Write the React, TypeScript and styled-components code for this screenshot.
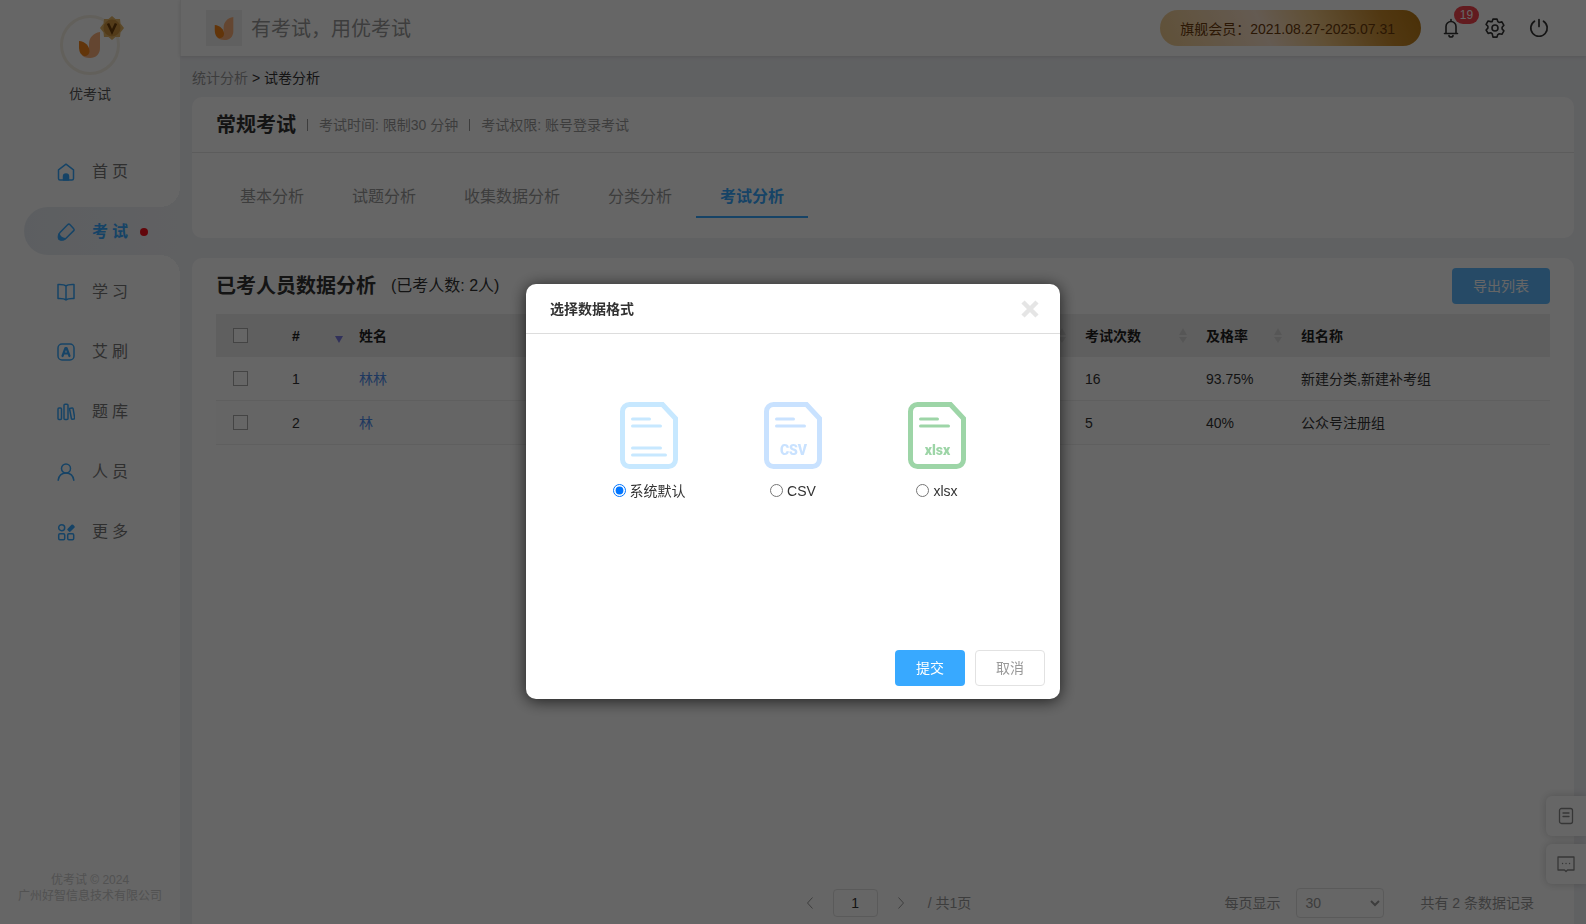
import React from 'react';
import styled, { createGlobalStyle, css } from 'styled-components';

const BLUE = '#38a9ff';
const PAGE = '#f1f2f6';

const GlobalStyle = createGlobalStyle`
  *, *::before, *::after { box-sizing: border-box; }
  body {
    margin: 0;
    background: ${PAGE};
    color: #333;
    font: 14px/20px "Liberation Sans", "Noto Sans CJK SC", sans-serif;
  }
  button, input, select { font: inherit; }
  h1, h2, p { margin: 0; }
`;

const Shell = styled.div`
  display: grid;
  grid-template-columns: 180px minmax(0, 1fr);
  min-height: 100vh;
`;

/* ---------- sidebar ---------- */

const Sidebar = styled.aside`
  display: flex;
  flex-direction: column;
  background: #fff;
`;

const Profile = styled.div`
  display: flex;
  flex-direction: column;
  align-items: center;
  gap: 9px;
  padding-top: 15px;
  height: 141px;
  color: #555;
`;

const Avatar = styled.div`
  position: relative;
  display: grid;
  place-items: center;
  width: 60px;
  height: 60px;
  border: 3px solid #f6efe4;
  border-radius: 50%;
`;

const VipMark = styled.svg`
  position: absolute;
  top: -2px;
  right: -7px;
`;

const Nav = styled.nav`
  display: flex;
  flex-direction: column;
  gap: 12px;
  padding: 6px 0 0 24px;
`;

const NavItem = styled.a<{ $active?: boolean }>`
  position: relative;
  display: flex;
  align-items: center;
  gap: 17px;
  height: 48px;
  padding: 2px 0 0 33px;
  border-radius: 24px 0 0 24px;
  color: #777;
  font-size: 16px;
  text-decoration: none;
  svg { color: ${BLUE}; }

  ${({ $active }) => $active && css`
    background: linear-gradient(90deg, #e7ecf2, ${PAGE});
    color: ${BLUE};
    font-weight: 700;
    &::before, &::after {
      content: '';
      position: absolute;
      right: 0;
      width: 20px;
      height: 20px;
    }
    &::before {
      bottom: 100%;
      background: radial-gradient(circle at 0 0, transparent 20px, ${PAGE} 20px);
    }
    &::after {
      top: 100%;
      background: radial-gradient(circle at 0 100%, transparent 20px, ${PAGE} 20px);
    }
  `}
`;

const NavLabel = styled.span`
  letter-spacing: 4px;
`;

const NewDot = styled.i`
  width: 8px;
  height: 8px;
  margin-left: -9px;
  border-radius: 50%;
  background: #f5101c;
`;

const Copyright = styled.footer`
  margin-top: auto;
  padding-bottom: 20px;
  color: #ccc;
  font-size: 12px;
  line-height: 16px;
  text-align: center;
`;

/* ---------- main column ---------- */

const Main = styled.div`
  display: flex;
  flex-direction: column;
`;

const TopBar = styled.header`
  display: flex;
  align-items: center;
  height: 56px;
  padding: 0 37px 0 25px;
  border-left: 1px solid #f0f0f0;
  background: #fff;
  box-shadow: 0 1px 4px rgba(0, 0, 0, 0.12);
`;

const Brand = styled.div`
  display: flex;
  align-items: center;
  gap: 9px;
  margin-right: auto;
  color: #999;
  font-size: 20px;
  line-height: 36px;
`;

const BrandTile = styled.span`
  display: grid;
  place-items: center;
  width: 36px;
  height: 36px;
  background: #f1f1f1;
`;

const BrandText = styled.span`
  padding-top: 2px;
`;

const Membership = styled.div`
  height: 36px;
  margin-right: 20px;
  padding: 0 26px 0 20px;
  border-radius: 18px;
  background: linear-gradient(65deg, #efc98c 0%, #fbe3cd 40%, #f0c684 60%, #c98a2c 85%, #b87812 100%);
  color: #6b3a0a;
  line-height: 38px;
`;

const ToolButton = styled.button`
  position: relative;
  display: grid;
  place-items: center;
  width: 20px;
  height: 20px;
  padding: 0;
  border: 0;
  background: none;
  color: #333;
  & + & { margin-left: 24px; }
`;

const Count = styled.span`
  position: absolute;
  top: -12px;
  left: 13px;
  width: 25px;
  height: 18px;
  border-radius: 9px;
  background: #f5454f;
  color: #fff;
  font-size: 12px;
  line-height: 18px;
`;

const Content = styled.main`
  display: flex;
  flex: 1;
  flex-direction: column;
  padding: 0 12px;
`;

const Breadcrumb = styled.nav`
  padding: 12px 0 9px;
  color: #333;
  a { color: #999; text-decoration: none; }
`;

const Card = styled.section<{ $fill?: boolean }>`
  border-radius: ${({ $fill }) => ($fill ? '10px 10px 0 0' : '10px')};
  background: #fff;
  ${({ $fill }) => $fill && css`
    display: flex;
    flex: 1;
    flex-direction: column;
    margin-top: 20px;
    padding: 10px 24px 6px;
  `}
`;

const ExamHead = styled.div`
  display: flex;
  align-items: center;
  gap: 11px;
  height: 56px;
  padding: 0 24px;
  border-bottom: 1px solid #e6e6e6;
  color: #999;
`;

const Title = styled.h1`
  color: #333;
  font-size: 20px;
  line-height: 28px;
`;

const Divider = styled.i`
  width: 1px;
  height: 12px;
  background: #999;
`;

const Tabs = styled.div`
  display: flex;
  padding: 20px 24px;
`;

const Tab = styled.button<{ $active?: boolean }>`
  height: 45px;
  padding: 4px 24px 0;
  border: 0;
  border-bottom: 2px solid ${({ $active }) => ($active ? BLUE : 'transparent')};
  background: none;
  color: ${({ $active }) => ($active ? BLUE : '#999')};
  font-size: 16px;
  font-weight: ${({ $active }) => ($active ? 700 : 400)};
`;

const ListHead = styled.div`
  display: flex;
  align-items: center;
  gap: 15px;
  margin-bottom: 10px;
`;

const Subtotal = styled.span`
  font-size: 16px;
`;

const PrimaryButton = styled.button<{ $soft?: boolean }>`
  height: 36px;
  padding: 0 21px;
  border: 0;
  border-radius: 4px;
  background: ${({ $soft }) => ($soft ? '#60baff' : BLUE)};
  color: #fff;
  ${({ $soft }) => $soft && 'margin-left: auto;'}
`;

const Table = styled.table`
  width: 100%;
  table-layout: fixed;
  border-collapse: separate;
  border-spacing: 0;
  color: #333;
  th, td {
    padding: 0 3px 0 16px;
    text-align: left;
  }
  th:first-child, td:first-child { padding-left: 17px; }
  th {
    height: 43px;
    background: #eee;
    color: #222;
  }
  td {
    height: 44px;
    border-bottom: 1px solid #eee;
  }
  tbody tr:nth-child(even) td { background: #fcfcfc; }
  a { color: #4f8ef0; text-decoration: none; }
`;

const Col = styled.col<{ $w?: number }>`
  width: ${({ $w }) => ($w ? `${$w}px` : 'auto')};
`;

const HeadCell = styled.div<{ $sorted?: boolean }>`
  display: flex;
  align-items: center;
  justify-content: space-between;
  margin-right: ${({ $sorted }) => ($sorted ? -3 : 0)}px;
`;

const Check = styled.input`
  display: block;
  appearance: none;
  width: 15px;
  height: 15px;
  margin: 0;
  border: 1px solid #aaa;
  background: #fff;
`;

const Pager = styled.div`
  display: flex;
  align-items: center;
  margin-top: auto;
  padding-left: 8px;
  color: #999;
`;

const PagerSide = styled.div<{ $end?: boolean }>`
  display: flex;
  flex: 1;
  align-items: center;
  justify-content: ${({ $end }) => ($end ? 'flex-end' : 'flex-start')};
`;

const PageArrow = styled.button`
  display: grid;
  place-items: center;
  width: 14px;
  height: 20px;
  padding: 0;
  border: 0;
  background: none;
  color: #999;
`;

const PageBox = styled.input`
  width: 45px;
  height: 28px;
  margin: 0 16px;
  padding: 0;
  border: 1px solid #e0e0e0;
  border-radius: 4px;
  background: #fff;
  color: #333;
  text-align: center;
`;

const PageTotal = styled.span`
  margin-left: 20px;
`;

const SizeLabel = styled.label`
  display: flex;
  align-items: center;
  gap: 16px;
  margin-right: 36px;
`;

const SizeSelect = styled.select`
  width: 88px;
  height: 30px;
  padding: 0 4px;
  border: 1px solid #e0e0e0;
  border-radius: 4px;
  background: #fff;
  color: #999;
`;

const Records = styled.span`
  margin-right: 16px;
`;

const Dock = styled.div`
  position: fixed;
  right: 0;
  bottom: 40px;
  display: flex;
  flex-direction: column;
  gap: 8px;
`;

const DockButton = styled.button`
  display: grid;
  place-items: center;
  width: 40px;
  height: 40px;
  padding: 0;
  border: 0;
  border-radius: 6px 0 0 6px;
  background: #fff;
  box-shadow: 0 0 8px rgba(0, 0, 0, 0.2);
  color: #888;
`;

/* ---------- dialog ---------- */

const Backdrop = styled.div`
  position: fixed;
  inset: 0;
  display: flex;
  align-items: flex-start;
  justify-content: center;
  padding-top: 284px;
  background: rgba(0, 0, 0, 0.6);
`;

const Dialog = styled.div`
  display: flex;
  flex-direction: column;
  width: 534px;
  border-radius: 10px;
  background: #fff;
  box-shadow: 0 2px 16px rgba(0, 0, 0, 0.7);
`;

const DialogHead = styled.div`
  display: flex;
  align-items: center;
  justify-content: space-between;
  height: 50px;
  padding: 0 21px 0 24px;
  border-bottom: 1px solid #ddd;
`;

const DialogTitle = styled.h2`
  font-size: 14px;
  line-height: 20px;
`;

const CloseButton = styled.button`
  display: grid;
  padding: 0;
  border: 0;
  background: none;
`;

const Formats = styled.div`
  display: flex;
  justify-content: center;
  padding: 68px 0 149px;
`;

const Format = styled.label`
  display: flex;
  flex-direction: column;
  align-items: center;
  gap: 12px;
  width: 144px;
`;

const RadioLine = styled.span`
  display: flex;
  align-items: center;
  gap: 4px;
  input { width: 13px; height: 13px; margin: 0 0 2px; }
`;

const DialogFoot = styled.div`
  display: flex;
  justify-content: flex-end;
  gap: 10px;
  padding: 0 15px 13px;
`;

const PlainButton = styled.button`
  height: 36px;
  padding: 0 20px;
  border: 1px solid #e2e2e2;
  border-radius: 4px;
  background: #fff;
  color: #999;
`;

/* ---------- drawings ---------- */

const Flame = ({ size }: { size: number }) => (
  <svg width={size} height={size} viewBox="0 0 26 26" aria-hidden="true">
    <path d="M23 0v16c0 6-4 10-10 10-4 0-7-1-8-3l7-4v-7C12 6 16 1 23 0Z" fill="#fbb07a" />
    <path d="M2 9c6 .5 10.500 5 10.500 10 0 3-2 5-5 5C4 23.500 2 20 2 15Z" fill="#f5851a" />
  </svg>
);

const Sorter = ({ down }: { down?: boolean }) => (
  <svg width="8" height="15" viewBox="0 0 8 15" aria-hidden="true">
    {!down && <path d="M4 0l4 7H0Z" fill="#d8d8d8" />}
    <path d={down ? 'M0 8h8l-4 7Z' : 'M0 9h8l-4 6Z'} fill={down ? '#7b7be0' : '#d8d8d8'} />
  </svg>
);

const Line = ({ size = 18, box = 18, width = 1.5, children }: {
  size?: number; box?: number; width?: number; children: React.ReactNode;
}) => (
  <svg width={size} height={size} viewBox={`0 0 ${box} ${box}`} fill="none" stroke="currentColor"
    strokeWidth={width} strokeLinejoin="round" strokeLinecap="round" aria-hidden="true">
    {children}
  </svg>
);

const FileIcon = ({ color, text }: { color: string; text?: string }) => (
  <svg width="58" height="67" viewBox="0 0 58 67" fill="none" stroke={color} aria-hidden="true">
    <path d="M9.500 2.500H42.500L55.500 16.500V57.500a7 7 0 0 1-7 7H9.500a7 7 0 0 1-7-7V9.500a7 7 0 0 1 7-7Z" strokeWidth="5" />
    <path d="M12.500 17H29.500M12.500 24H40.500" strokeWidth="3" strokeLinecap="round" />
    {text ? (
      <text x="29.500" y="53" textAnchor="middle" fill={color} stroke="none" fontFamily="Roboto, sans-serif"
        fontSize="14" fontWeight="900">{text}</text>
    ) : (
      <path d="M12.500 46H40.500M12.500 53H45.500" strokeWidth="3" strokeLinecap="round" />
    )}
  </svg>
);

const navItems = [
  { label: '首页', icon: <><path d="M1.500 6.800 9 1.200l7.500 5.600V15.500a1.500 1.500 0 0 1-1.500 1.500H3a1.500 1.500 0 0 1-1.500-1.500Z" /><path d="M6.500 17v-3.500a2.500 2.500 0 0 1 5 0V17Z" fill="currentColor" /></> },
  { label: '考试', active: true, icon: <><path d="M10.600 1.700a1.800 1.800 0 0 1 2.500 0l3.400 3.700a1.800 1.800 0 0 1 0 2.500l-7.700 7.600c-1.200 1.200-3 1.500-5.300 1.300-1.200-.1-2-.8-2-2.300 0-2 .2-3.500 1.500-4.900Z" /><path d="M2 11c1 2.500 3 4.300 6 4.800-2 1.400-4.500 1.200-5.500.2S1.200 13 2 11Z" fill="currentColor" /></> },
  { label: '学习', icon: <path d="M9 3C7.500 1.500 5 1.300 1 1.500v14c4-.2 6.500 0 8 1.500 1.500-1.500 4-1.700 8-1.500v-14C13 1.300 10.500 1.500 9 3ZM9 3v14" /> },
  { label: '艾刷', icon: <><rect x="1" y="1" width="16" height="16" rx="4" /><path d="M5.500 13 8.500 5h1l3 8M7 10.500h4" strokeWidth="2.200" /></> },
  { label: '题库', icon: <><rect x="1" y="5" width="3.500" height="11.500" rx="1" /><rect x="7" y="1.200" width="4" height="15.300" rx="1" /><path d="m12.500 5.500 2.600-.6a1 1 0 0 1 1 .7L17.700 15a1 1 0 0 1-.8 1l-1.500.3a1 1 0 0 1-1-.8Z" /></> },
  { label: '人员', icon: <><circle cx="9" cy="5.500" r="4.500" /><path d="M1.200 17.200c.6-4.500 3.800-7.200 7.800-7.200s7.200 2.700 7.800 7.200" /></> },
  { label: '更多', icon: <><circle cx="4.700" cy="4.700" r="3" /><rect x="1.700" y="10.700" width="6" height="6" rx="1.200" /><rect x="10.700" y="10.700" width="6" height="6" rx="1.200" /><path d="m11.500 6.500 3.800-3.800 1.200 1.200-3.800 3.800Z" strokeWidth="2.400" fill="currentColor" /></> },
];

const tabs = ['基本分析', '试题分析', '收集数据分析', '分类分析', '考试分析'];

const people = [
  { name: '林林', times: 16, rate: '93.75%', group: '新建分类,新建补考组' },
  { name: '林', times: 5, rate: '40%', group: '公众号注册组' },
];

const formats = [
  { label: '系统默认', color: '#c7e8ff' },
  { label: 'CSV', color: '#c9e2ff', text: 'CSV' },
  { label: 'xlsx', color: '#9dd5a7', text: 'xlsx' },
];

export default function App() {
  return (
    <>
      <GlobalStyle />
      <Shell>
        <Sidebar>
          <Profile>
            <Avatar>
              <Flame size={26} />
              <VipMark width="24" height="24" viewBox="0 0 24 24" aria-hidden="true">
                <path d="M12 0l3.500 3H20l.5 4.500L24 12l-3.500 4.500L20 21h-4.500L12 24l-3.500-3H4l-.5-4.500L0 12l3.500-4.500L4 3h4.500Z" fill="#e3b566" />
                <circle cx="12" cy="12" r="8.500" fill="#cf9440" />
                <path d="m8 7.500 4 8.500 4-8.500" fill="none" stroke="#6e400a" strokeWidth="2.600" />
              </VipMark>
            </Avatar>
            <span>优考试</span>
          </Profile>
          <Nav>
            {navItems.map((item) => (
              <NavItem key={item.label} href="#" $active={item.active}>
                <Line>{item.icon}</Line>
                <NavLabel>{item.label}</NavLabel>
                {item.active && <NewDot />}
              </NavItem>
            ))}
          </Nav>
          <Copyright>
            <p>优考试 © 2024</p>
            <p>广州好智信息技术有限公司</p>
          </Copyright>
        </Sidebar>

        <Main>
          <TopBar>
            <Brand>
              <BrandTile><Flame size={23} /></BrandTile>
              <BrandText>有考试，用优考试</BrandText>
            </Brand>
            <Membership>旗舰会员：2021.08.27-2025.07.31</Membership>
            <ToolButton aria-label="通知">
              <Line size={20} box={20} width={1.6}>
                <path d="M3.500 15.500h13M5 15V8.500a5 5 0 0 1 10 0V15M10 1.500V3M8 17.500a2 1.500 0 0 0 4 0" />
              </Line>
              <Count>19</Count>
            </ToolButton>
            <ToolButton aria-label="设置">
              <Line size={20} box={20} width={1.6}>
                <path d="M8 1.500h4l.8 2.500 1.500.9 2.600-.6 2 3.400-1.800 1.900v1.800l1.800 1.900-2 3.400-2.600-.6-1.500.9-.8 2.500H8L7.200 16.100l-1.500-.9-2.600.6-2-3.400 1.800-1.900V8.700L1.100 6.800l2-3.400 2.600.6L7.200 4Z" transform="translate(0 -.4)" />
                <circle cx="10" cy="10" r="3" />
              </Line>
            </ToolButton>
            <ToolButton aria-label="退出">
              <Line size={20} box={20} width={1.7}>
                <path d="M10 1.500v7M5.500 3.200a8.200 8.200 0 1 0 9 0" />
              </Line>
            </ToolButton>
          </TopBar>

          <Content>
            <Breadcrumb><a href="#">统计分析</a> &gt; 试卷分析</Breadcrumb>
            <Card>
              <ExamHead>
                <Title>常规考试</Title>
                <Divider />
                <span>考试时间: 限制30 分钟</span>
                <Divider />
                <span>考试权限: 账号登录考试</span>
              </ExamHead>
              <Tabs>
                {tabs.map((t) => <Tab key={t} $active={t === '考试分析'}>{t}</Tab>)}
              </Tabs>
            </Card>

            <Card $fill>
              <ListHead>
                <Title as="h2">已考人员数据分析</Title>
                <Subtotal>(已考人数: 2人)</Subtotal>
                <PrimaryButton $soft>导出列表</PrimaryButton>
              </ListHead>
              <Table>
                <colgroup>
                  <Col $w={60} /><Col $w={67} /><Col /><Col $w={121} /><Col $w={95} /><Col $w={265} />
                </colgroup>
                <thead>
                  <tr>
                    <th><Check type="checkbox" aria-label="全选" /></th>
                    <th><HeadCell $sorted>#<Sorter down /></HeadCell></th>
                    <th><HeadCell>姓名<Sorter /></HeadCell></th>
                    <th><HeadCell>考试次数<Sorter /></HeadCell></th>
                    <th><HeadCell>及格率<Sorter /></HeadCell></th>
                    <th>组名称</th>
                  </tr>
                </thead>
                <tbody>
                  {people.map((p, i) => (
                    <tr key={p.name}>
                      <td><Check type="checkbox" aria-label={p.name} /></td>
                      <td>{i + 1}</td>
                      <td><a href="#">{p.name}</a></td>
                      <td>{p.times}</td>
                      <td>{p.rate}</td>
                      <td>{p.group}</td>
                    </tr>
                  ))}
                </tbody>
              </Table>
              <Pager>
                <PagerSide />
                <PageArrow aria-label="上一页">
                  <svg width="6" height="12" viewBox="0 0 6 12" fill="none" stroke="currentColor"><path d="M5.500.5.500 6l5 5.500" /></svg>
                </PageArrow>
                <PageBox aria-label="页码" defaultValue="1" />
                <PageArrow aria-label="下一页">
                  <svg width="6" height="12" viewBox="0 0 6 12" fill="none" stroke="currentColor"><path d="M.5.500 5.500 6l-5 5.500" /></svg>
                </PageArrow>
                <PageTotal>/ 共1页</PageTotal>
                <PagerSide $end>
                  <SizeLabel>
                    每页显示
                    <SizeSelect defaultValue="30"><option>30</option></SizeSelect>
                  </SizeLabel>
                  <Records>共有 2 条数据记录</Records>
                </PagerSide>
              </Pager>
            </Card>
          </Content>
        </Main>
      </Shell>

      <Dock>
        <DockButton aria-label="文档">
          <Line size={18} width={1.3}><rect x="2.500" y="1.500" width="13" height="15" rx="2" /><path d="M6 6h6M6 9.500h6" /></Line>
        </DockButton>
        <DockButton aria-label="客服">
          <Line size={18} width={1.3}><path d="M1 2h16v13h-6.500L9 16.500 7.500 15H1ZM5.500 8.500h.1M9 8.500h.1M12.500 8.500h.1" /></Line>
        </DockButton>
      </Dock>

      <Backdrop>
        <Dialog role="dialog" aria-labelledby="format-title">
          <DialogHead>
            <DialogTitle id="format-title">选择数据格式</DialogTitle>
            <CloseButton aria-label="关闭">
              <svg width="18" height="18" viewBox="0 0 18 18" stroke="#e5e5e5" strokeWidth="4.500"><path d="M2 2l14 14M16 2L2 16" /></svg>
            </CloseButton>
          </DialogHead>
          <Formats>
            {formats.map((f, i) => (
              <Format key={f.label}>
                <FileIcon color={f.color} text={f.text} />
                <RadioLine>
                  <input type="radio" name="format" defaultChecked={i === 0} />
                  {f.label}
                </RadioLine>
              </Format>
            ))}
          </Formats>
          <DialogFoot>
            <PrimaryButton>提交</PrimaryButton>
            <PlainButton>取消</PlainButton>
          </DialogFoot>
        </Dialog>
      </Backdrop>
    </>
  );
}
